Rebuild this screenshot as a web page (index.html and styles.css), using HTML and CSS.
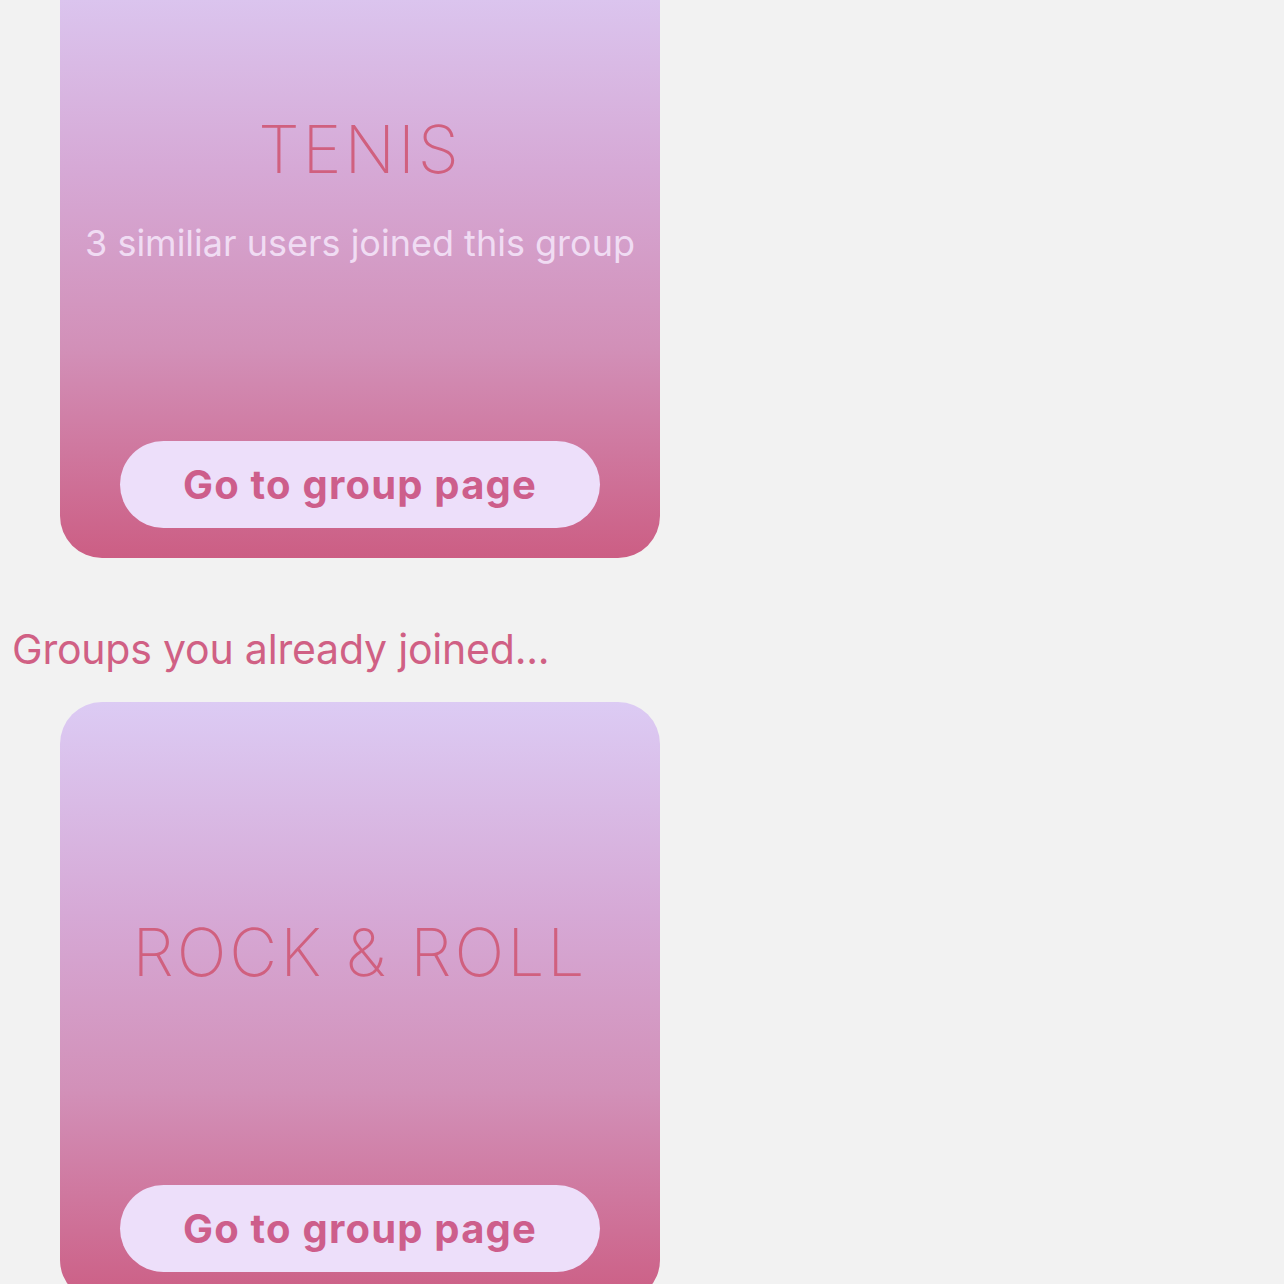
FILE: index.html
```html
<!DOCTYPE html>
<html lang="en">
<head>
<meta charset="utf-8">
<title>Groups</title>
<link rel="stylesheet" href="styles.css">
</head>
<body>
<main class="page">
  <section class="card">
    <div class="card-body has-sub">
      <h2 class="card-title">TENIS</h2>
      <p class="card-sub">3 similiar users joined this group</p>
    </div>
    <button class="card-btn">Go to group page</button>
  </section>

  <h1 class="section-title">Groups you already joined...</h1>

  <section class="card">
    <div class="card-body">
      <h2 class="card-title">ROCK &amp; ROLL</h2>
    </div>
    <button class="card-btn">Go to group page</button>
  </section>
</main>
</body>
</html>
```
FILE: styles.css
```css
html, body {
  margin: 0;
  padding: 0;
  background: #f2f2f2;
}

.page {
  margin-top: -42px;
  padding: 0 12px;
  display: flex;
  flex-direction: column;
}

.card {
  margin-left: 48px;
  width: 600px;
  height: 600px;
  box-sizing: border-box;
  border-radius: 42px;
  background: linear-gradient(180deg, #dccbf4 0%, #d6a9d6 35%, #d290b8 65%, #cc5e84 100%);
  display: flex;
  flex-direction: column;
  align-items: center;
  padding-bottom: 30px;
}

.card-body {
  flex: 1;
  box-sizing: border-box;
  display: flex;
  flex-direction: column;
  align-items: center;
  justify-content: center;
  width: 100%;
  padding-top: 17px;
}

.card-body.has-sub {
  padding-top: 0;
  padding-bottom: 25px;
}

.card-title {
  margin: 0;
  font-family: Inter, "Liberation Sans", sans-serif;
  font-weight: 200;
  font-size: 66px;
  line-height: 80px;
  letter-spacing: 3px;
  color: #d0607f;
}

.card-sub {
  margin: 32px 0 0;
  font-family: Inter, "Liberation Sans", sans-serif;
  font-weight: 400;
  font-size: 36px;
  line-height: 44px;
  letter-spacing: 0;
  color: #f0dcf3;
}

.card-btn {
  width: 480px;
  height: 87px;
  border: none;
  border-radius: 44px;
  background: #eddffa;
  color: #cd5e8b;
  font-family: Inter, "Liberation Sans", sans-serif;
  font-weight: 700;
  font-size: 40px;
  letter-spacing: 1.2px;
  padding: 0;
  flex: none;
}

.section-title {
  margin: 66px 0 28px;
  font-family: Inter, "Liberation Sans", sans-serif;
  font-weight: 400;
  font-size: 41px;
  line-height: 50px;
  letter-spacing: -0.2px;
  color: #d06084;
}
```
